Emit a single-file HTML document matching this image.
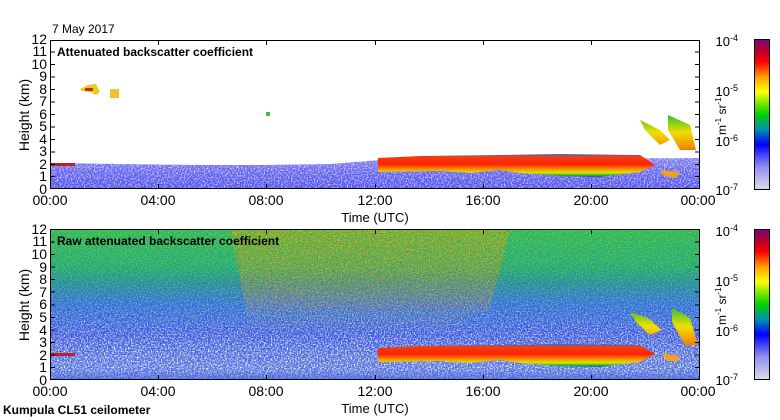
<!DOCTYPE html>
<html><head><meta charset="utf-8"><style>
html,body{margin:0;padding:0;background:#fff;width:780px;height:420px;overflow:hidden}
svg{display:block}
text{font-family:"Liberation Sans",sans-serif;fill:#000}
</style></head><body>
<svg width="780" height="420" viewBox="0 0 780 420" xmlns="http://www.w3.org/2000/svg">
<defs>
<linearGradient id="cb" x1="0" y1="1" x2="0" y2="0">
<stop offset="0" stop-color="#dcdcec"/><stop offset="0.15" stop-color="#9090f0"/><stop offset="0.3" stop-color="#0000ff"/>
<stop offset="0.4" stop-color="#0090b0"/><stop offset="0.5" stop-color="#00d000"/><stop offset="0.6" stop-color="#a0f000"/>
<stop offset="0.65" stop-color="#ffff00"/><stop offset="0.75" stop-color="#ffa000"/><stop offset="0.85" stop-color="#ff0000"/>
<stop offset="0.93" stop-color="#b00030"/><stop offset="1" stop-color="#800080"/></linearGradient>
<linearGradient id="low" x1="0" y1="0" x2="0" y2="1">
<stop offset="0" stop-color="#8080f0"/><stop offset="0.5" stop-color="#6060f0"/><stop offset="1" stop-color="#5050f0"/></linearGradient>
<linearGradient id="raw" x1="0" y1="0" x2="0" y2="1">
<stop offset="0" stop-color="#40c040"/><stop offset="0.25" stop-color="#30b060"/><stop offset="0.5" stop-color="#3060e0"/>
<stop offset="0.7" stop-color="#4040f0"/><stop offset="0.92" stop-color="#6060f0"/><stop offset="1" stop-color="#5050f0"/></linearGradient>
<linearGradient id="fadeW" x1="0" y1="229" x2="0" y2="380" gradientUnits="userSpaceOnUse">
<stop offset="0" stop-color="#000"/><stop offset="0.35" stop-color="#000"/><stop offset="0.8" stop-color="#fff"/><stop offset="0.93" stop-color="#fff"/><stop offset="1" stop-color="#444"/></linearGradient>
<mask id="mW"><rect x="0" y="229" width="780" height="151" fill="url(#fadeW)"/></mask>
<linearGradient id="fadeH" x1="0" y1="229" x2="0" y2="380" gradientUnits="userSpaceOnUse">
<stop offset="0" stop-color="#fff"/><stop offset="0.45" stop-color="#aaa"/><stop offset="0.7" stop-color="#000"/></linearGradient>
<mask id="mH"><rect x="0" y="229" width="780" height="151" fill="url(#fadeH)"/></mask>
<linearGradient id="cloud" x1="0" y1="0" x2="0" y2="1">
<stop offset="0" stop-color="#3060f0"/><stop offset="0.12" stop-color="#f04010"/><stop offset="0.45" stop-color="#ff2000"/>
<stop offset="0.68" stop-color="#f0a000"/><stop offset="0.82" stop-color="#e0e000"/><stop offset="0.92" stop-color="#20c020"/><stop offset="1" stop-color="#2040f0"/></linearGradient>
<linearGradient id="ci" x1="0" y1="0" x2="0" y2="1">
<stop offset="0" stop-color="#30c030"/><stop offset="0.5" stop-color="#f0e000"/><stop offset="1" stop-color="#f08000"/></linearGradient>
<filter id="spk" x="0" y="0" width="100%" height="100%">
<feTurbulence type="fractalNoise" baseFrequency="0.7" numOctaves="1" seed="3"/>
<feColorMatrix values="0 0 0 0 1  0 0 0 0 1  0 0 0 0 1  3 0 0 0 -1.3"/>
</filter>
<filter id="spkb" x="0" y="0" width="100%" height="100%">
<feTurbulence type="fractalNoise" baseFrequency="0.8" numOctaves="1" seed="7"/>
<feColorMatrix values="0 0 0 0 0  0 0 0 0 0.2  0 0 0 0 1  3 0 0 0 -1.4"/>
</filter>
<filter id="spkg" x="0" y="0" width="100%" height="100%">
<feTurbulence type="fractalNoise" baseFrequency="0.8" numOctaves="1" seed="5"/>
<feColorMatrix values="0 0 0 0 0.2  0 0 0 0 0.85  0 0 0 0 0.1  3 0 0 0 -1.4"/>
</filter>
<filter id="spky" x="0" y="0" width="100%" height="100%">
<feTurbulence type="fractalNoise" baseFrequency="0.75" numOctaves="1" seed="11"/>
<feColorMatrix values="0 0 0 0 1  0 0 0 0 0.6  0 0 0 0 0  3 0 0 0 -1.3"/>
</filter>
<filter id="spkr" x="0" y="0" width="100%" height="100%">
<feTurbulence type="fractalNoise" baseFrequency="0.75" numOctaves="1" seed="19"/>
<feColorMatrix values="0 0 0 0 1  0 0 0 0 0.1  0 0 0 0 0  3 0 0 0 -1.4"/>
</filter>
<clipPath id="c1"><rect x="50" y="40" width="650" height="149"/></clipPath>
<clipPath id="c2"><rect x="50" y="229" width="650" height="151"/></clipPath>
<clipPath id="hotc"><path d="M230 229 L510 229 L490 310 L440 330 L250 330Z"/></clipPath>
</defs>

<!-- TOP PLOT -->
<g clip-path="url(#c1)">
<path d="M50 163 L120 164 L200 165 L260 165 L330 164 L380 160 L700 158 L700 189 L50 189Z" fill="url(#low)"/>
<rect x="50" y="158" width="650" height="31" filter="url(#spk)" opacity="0.75"/>
<rect x="50" y="163" width="25" height="3" fill="#c02020"/>
<path d="M378 158 L420 156 L500 155 L560 154 L640 155 L655 165 L640 172 L600 177 L560 176 L520 173 L500 170 L470 173 L440 171 L378 172Z" fill="url(#cloud)"/>
<path d="M640 120 L660 130 L670 140 L660 145 L645 130Z M668 115 L690 125 L696 150 L680 150 L668 130Z" fill="url(#ci)"/>
<path d="M660 170 L680 172 L676 178 L664 176Z" fill="#f0a020"/>
<path d="M80 89 L88 85 L96 84 L100 92 L96 95 L90 92 L82 91Z" fill="#e0d020"/><rect x="85" y="88" width="8" height="3" fill="#e02020"/>
<rect x="110" y="89" width="9" height="9" fill="#f0c030"/>
<rect x="266" y="112" width="4" height="4" fill="#40c040"/>
</g>
<rect x="50.5" y="40.5" width="649" height="148" fill="none" stroke="#000"/>
<text x="57" y="56" font-size="12" font-weight="bold">Attenuated backscatter coefficient</text>
<text x="52" y="33" font-size="12">7 May 2017</text>

<!-- BOTTOM PLOT -->
<g clip-path="url(#c2)">
<rect x="50" y="229" width="650" height="151" fill="url(#raw)"/>
<rect x="50" y="229" width="650" height="151" filter="url(#spkg)" opacity="0.8"/>
<rect x="50" y="229" width="650" height="151" filter="url(#spkb)" opacity="0.7"/>
<g mask="url(#mH)">
<g clip-path="url(#hotc)">
<rect x="230" y="229" width="280" height="110" filter="url(#spky)" opacity="0.9"/>
<rect x="230" y="229" width="280" height="80" filter="url(#spkr)" opacity="0.85"/>
</g>
</g>
<rect x="50" y="229" width="650" height="151" filter="url(#spk)" mask="url(#mW)"/>
<rect x="50" y="353" width="25" height="3" fill="#c02020"/>
<path d="M378 348 L420 346 L500 345 L560 344 L640 345 L655 354 L640 362 L600 367 L560 366 L520 363 L500 360 L470 363 L440 361 L378 362Z" fill="url(#cloud)"/>
<path d="M630 312 L648 318 L662 330 L650 335 L636 322Z M672 308 L690 318 L698 345 L685 345 L672 322Z" fill="url(#ci)"/>
<path d="M662 353 L680 356 L676 362 L666 360Z" fill="#f0a020"/>
</g>
<rect x="50.5" y="229.5" width="649" height="150" fill="none" stroke="#000"/>
<text x="57" y="245" font-size="12" font-weight="bold">Raw attenuated backscatter coefficient</text>

<!-- ticks and labels -->
<g stroke="#000" stroke-width="1">
<path d="M50 176.5h5M50 164.5h5M50 152h5M50 139.5h5M50 127h5M50 114.5h5M50 102h5M50 89.5h5M50 77h5M50 64.5h5M50 52h5
M700 176.5h-5M700 164.5h-5M700 152h-5M700 139.5h-5M700 127h-5M700 114.5h-5M700 102h-5M700 89.5h-5M700 77h-5M700 64.5h-5M700 52h-5
M158.5 189v-5M266.5 189v-5M375.5 189v-5M483.5 189v-5M591.5 189v-5M158.5 40v5M266.5 40v5M375.5 40v5M483.5 40v5M591.5 40v5
M50 367.5h5M50 355h5M50 342.5h5M50 330h5M50 317.5h5M50 305h5M50 292h5M50 279.5h5M50 267h5M50 254.5h5M50 242h5
M700 367.5h-5M700 355h-5M700 342.5h-5M700 330h-5M700 317.5h-5M700 305h-5M700 292h-5M700 279.5h-5M700 267h-5M700 254.5h-5M700 242h-5
M158.5 380v-5M266.5 380v-5M375.5 380v-5M483.5 380v-5M591.5 380v-5M158.5 229v5M266.5 229v5M375.5 229v5M483.5 229v5M591.5 229v5"/>
</g>
<g font-size="14" text-anchor="end">
<text x="47" y="194">0</text><text x="47" y="181">1</text><text x="47" y="169">2</text><text x="47" y="156">3</text><text x="47" y="144">4</text><text x="47" y="131">5</text><text x="47" y="119">6</text><text x="47" y="106">7</text><text x="47" y="94">8</text><text x="47" y="81">9</text><text x="47" y="69">10</text><text x="47" y="56">11</text><text x="47" y="44">12</text>
<text x="47" y="385">0</text><text x="47" y="372">1</text><text x="47" y="360">2</text><text x="47" y="347">3</text><text x="47" y="335">4</text><text x="47" y="322">5</text><text x="47" y="309">6</text><text x="47" y="297">7</text><text x="47" y="284">8</text><text x="47" y="272">9</text><text x="47" y="259">10</text><text x="47" y="246">11</text><text x="47" y="234">12</text>
</g>
<g font-size="14" text-anchor="middle">
<text x="50" y="205">00:00</text><text x="158" y="205">04:00</text><text x="266" y="205">08:00</text><text x="375" y="205">12:00</text><text x="483" y="205">16:00</text><text x="591" y="205">20:00</text><text x="698" y="205">00:00</text>
<text x="50" y="396">00:00</text><text x="158" y="396">04:00</text><text x="266" y="396">08:00</text><text x="375" y="396">12:00</text><text x="483" y="396">16:00</text><text x="591" y="396">20:00</text><text x="698" y="396">00:00</text>
<text x="375" y="222" font-size="13">Time (UTC)</text><text x="375" y="413" font-size="13">Time (UTC)</text>
</g>
<text transform="translate(29,115) rotate(-90)" font-size="14" text-anchor="middle">Height (km)</text>
<text transform="translate(29,305) rotate(-90)" font-size="14" text-anchor="middle">Height (km)</text>
<text x="3" y="414" font-size="12" font-weight="bold">Kumpula CL51 ceilometer</text>

<!-- colorbars -->
<rect x="754.5" y="39.5" width="15" height="150" fill="url(#cb)" stroke="#000"/>
<rect x="754.5" y="229.5" width="15" height="150" fill="url(#cb)" stroke="#000"/>
<g font-size="13" text-anchor="end">
<text x="738" y="46">10<tspan font-size="9" dy="-5">-4</tspan></text>
<text x="738" y="96">10<tspan font-size="9" dy="-5">-5</tspan></text>
<text x="738" y="146">10<tspan font-size="9" dy="-5">-6</tspan></text>
<text x="738" y="195">10<tspan font-size="9" dy="-5">-7</tspan></text>
<text x="738" y="236">10<tspan font-size="9" dy="-5">-4</tspan></text>
<text x="738" y="286">10<tspan font-size="9" dy="-5">-5</tspan></text>
<text x="738" y="336">10<tspan font-size="9" dy="-5">-6</tspan></text>
<text x="738" y="385">10<tspan font-size="9" dy="-5">-7</tspan></text>
</g>
<text transform="translate(726,135) rotate(-90)" font-size="12">m<tspan font-size="8" dy="-5">-1</tspan><tspan dy="5"> sr</tspan><tspan font-size="8" dy="-5">-1</tspan></text>
<text transform="translate(726,325) rotate(-90)" font-size="12">m<tspan font-size="8" dy="-5">-1</tspan><tspan dy="5"> sr</tspan><tspan font-size="8" dy="-5">-1</tspan></text>
</svg>
</body></html>
